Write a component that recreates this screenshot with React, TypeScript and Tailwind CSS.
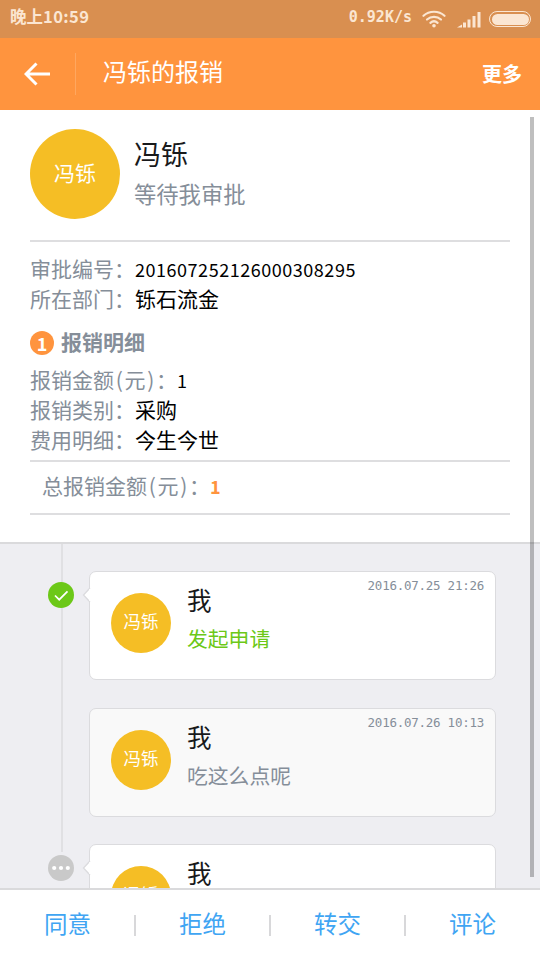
import React from 'react';

interface Step {
  name: string;
  text: string;
  time: string;
  state?: 'done' | 'pending';
  textColor: string;
  background: string;
}

const steps: Step[] = [
  { name: '我', text: '发起申请', time: '2016.07.25 21:26', state: 'done', textColor: 'text-[#6cc818]', background: 'bg-white' },
  { name: '我', text: '吃这么点呢', time: '2016.07.26 10:13', textColor: 'text-[#858e99]', background: 'bg-[#f9f9f9]' },
  { name: '我', text: '', time: '', state: 'pending', textColor: 'text-[#858e99]', background: 'bg-white' },
];

const actions = ['同意', '拒绝', '转交', '评论'];

const StatusBar: React.FC = () => (
  <div className="flex h-[38px] shrink-0 items-center justify-between bg-[#d98f50] pl-[10px] pr-[9px] font-bold text-[#fbe6d2]">
    <div className="flex items-center pb-[5px] text-[16.5px] leading-none">
      <span>晚上</span>
      <span className="tracking-[0.4px]">10:59</span>
    </div>
    <div className="flex items-center">
      <span className="mr-[10px] pb-1 font-['DejaVu_Sans_Mono',monospace] text-[15px] leading-none">0.92K/s</span>
      <svg width="24" height="18" viewBox="0 0 24 18" fill="none" stroke="#fbe6d2" strokeWidth="2.2" strokeLinecap="round">
        <path d="M1.500 5.800C7.300 .4 16.700 .4 22.500 5.800" />
        <path d="M5 9.500C9 5.900 15 5.900 19 9.500" />
        <path d="M8.400 12.800C10.500 11 13.500 11 15.600 12.800" />
        <circle cx="12" cy="15.700" r="1.800" fill="#fbe6d2" stroke="none" />
      </svg>
      <svg className="ml-[11px]" width="24" height="18" viewBox="0 0 24 18" fill="#fbe6d2">
        <path d="M0 17.500L5 14.500V17.500Z" />
        <rect x="6" y="12.500" width="3" height="5" />
        <rect x="10.500" y="9.500" width="3" height="8" />
        <rect x="15.500" y="6" width="3" height="11.500" />
        <rect x="20.500" y="2" width="3" height="15.500" />
      </svg>
      <div className="ml-[8px] h-4 w-[42px] rounded-full border-[1.5px] border-[#fbe6d2] p-[1.5px]">
        <div className="h-full rounded-full bg-[#fbe6d2]" />
      </div>
    </div>
  </div>
);

const Header: React.FC = () => (
  <header className="flex h-[72px] shrink-0 items-center bg-[#ff943e] text-white">
    <button className="flex h-full w-[75px] items-center pl-6">
      <svg width="27" height="24" viewBox="0 0 27 24" fill="none" stroke="#fff" strokeWidth="3">
        <path d="M12.500 1.500L2 12L12.500 22.500M2 12H26" />
      </svg>
    </button>
    <div className="h-[42px] w-px bg-[#ffa75f]" />
    <h1 className="ml-[27px] flex-1 pb-[6px] text-[24px] leading-none">冯铄的报销</h1>
    <button className="mr-[18px] text-[20px] font-bold leading-none">更多</button>
  </header>
);

// Brackets take exactly half of a full-width character
const Half: React.FC<{ children: string }> = ({ children }) => (
  <span className="inline-block w-[10.5px] text-center">{children}</span>
);

const Row: React.FC<{ label: React.ReactNode; children: React.ReactNode }> = ({ label, children }) => (
  <div className="flex h-[30px] items-center text-[21px] leading-none">
    <span className="text-[#858e99]">{label}：</span>
    <span className="text-black">{children}</span>
  </div>
);

const Details: React.FC = () => (
  <section className="h-[434px] shrink-0 border-b-2 border-[#dadadc] bg-white px-[30px] pt-[19px]">
    <div className="flex h-[113px] items-start border-b-2 border-[#dedee0]">
      <div className="flex size-[90px] items-center justify-center rounded-full bg-[#f5be25] pb-[2px] text-[21px] text-white">冯铄</div>
      <div className="ml-[14px] pt-[11px]">
        <div className="text-[27px] leading-[28px] text-[#18191b]">冯铄</div>
        <div className="mt-[12px] text-[22.3px] leading-[26px] text-[#858e99]">等待我审批</div>
      </div>
    </div>
    <div className="pt-[11px]">
      <Row label="审批编号"><span className="text-[18px] tracking-[0.53px]">201607252126000308295</span></Row>
      <Row label="所在部门">铄石流金</Row>
    </div>
    <div className="mt-[15px] flex h-[30px] items-center text-[21px] font-bold leading-none text-[#858e99]">
      <span className="mr-[7px] flex size-6 items-center justify-center rounded-full bg-[#ff943e] pb-px text-[18px] text-white">1</span>
      <span className="pb-[4px]">报销明细</span>
    </div>
    <div className="mt-[6px] h-[98px] border-b-2 border-[#dedee0]">
      <Row label={<>报销金额<Half>(</Half>元<Half>)</Half></>}><span className="text-[18px]">1</span></Row>
      <Row label="报销类别">采购</Row>
      <Row label="费用明细">今生今世</Row>
    </div>
    <div className="h-[53px] border-b-2 border-[#dedee0] pl-3 pt-[8px]">
      <Row label={<>总报销金额<Half>(</Half>元<Half>)</Half></>}>
        <span className="text-[18px] font-bold text-[#ff943e]">1</span>
      </Row>
    </div>
  </section>
);

const StepBadge: React.FC<{ state: 'done' | 'pending' }> = ({ state }) =>
  state === 'done' ? (
    <svg className="relative" width="26" height="26" viewBox="0 0 26 26">
      <circle cx="13" cy="13" r="13" fill="#6cc818" />
      <path d="M7 13.500L11.200 17.700L19.500 9.300" fill="none" stroke="#fff" strokeWidth="1.700" />
    </svg>
  ) : (
    <svg className="relative" width="26" height="26" viewBox="0 0 26 26">
      <circle cx="13" cy="13" r="13" fill="#c9c9c9" />
      <circle cx="6.200" cy="13" r="2.100" fill="#fff" />
      <circle cx="13" cy="13" r="2.100" fill="#fff" />
      <circle cx="19.800" cy="13" r="2.100" fill="#fff" />
    </svg>
  );

const StepCard: React.FC<{ step: Step }> = ({ step }) => (
  <div className="flex h-[109px] shrink-0">
    <div className="w-[41px] shrink-0 pt-[11px]">{step.state && <StepBadge state={step.state} />}</div>
    <div className={`relative flex w-[407px] rounded-[7px] border-[1.5px] border-[#dbdbde] pl-[21px] pt-[21px] ${step.background}`}>
      {step.state && (
        <svg className="absolute -left-[8px] top-[15px]" width="9" height="16" viewBox="0 0 9 16">
          <path d="M8 1L1.500 8L8 15" fill="#fff" stroke="#dbdbde" strokeWidth="1.300" />
          <rect x="7.200" y="2" width="1.800" height="12" fill="#fff" />
        </svg>
      )}
      <div className="flex size-[60px] items-center justify-center rounded-full bg-[#f5be25] pb-[3px] text-[17.5px] text-white">冯铄</div>
      <div className="ml-4 -mt-[7px]">
        <div className="text-[24.5px] leading-[28px] text-[#18191b]">{step.name}</div>
        <div className={`mt-[11px] text-[20.8px] leading-[26px] ${step.textColor}`}>{step.text}</div>
      </div>
      <span className="absolute right-[11px] top-[6px] whitespace-pre font-['DejaVu_Sans_Mono',monospace] text-[12.5px] leading-[16px] tracking-[-0.25px] text-[#858e99]">
        {step.time}
      </span>
    </div>
  </div>
);

const Timeline: React.FC = () => (
  <section className="relative flex min-h-0 flex-1 flex-col gap-[27.5px] overflow-hidden bg-[#eeeef2] pl-12 pt-[27px]">
    <div className="absolute left-[61px] top-0 h-[308px] w-[2px] bg-[#e0e0e3]" />
    {steps.map((step, i) => (
      <StepCard key={i} step={step} />
    ))}
  </section>
);

const ActionBar: React.FC = () => (
  <footer className="flex h-[72px] shrink-0 items-center border-t-2 border-[#dadadc] bg-white">
    {actions.map((action, i) => (
      <React.Fragment key={action}>
        {i > 0 && <div className="-mx-px h-[21px] w-[2px] bg-[#d8d8da]" />}
        <button className="flex-1 pb-[3px] text-[23.5px] leading-none text-[#3fa5f3]">{action}</button>
      </React.Fragment>
    ))}
  </footer>
);

const App: React.FC = () => {
  return (
    <div className="relative flex h-[960px] w-[540px] flex-col overflow-hidden font-['Noto_Sans_CJK_SC',sans-serif]">
      <StatusBar />
      <Header />
      <Details />
      <Timeline />
      <ActionBar />
      <div className="absolute right-[6px] top-[117px] h-[760px] w-[4px] bg-black/25" />
    </div>
  );
};

export default App;
